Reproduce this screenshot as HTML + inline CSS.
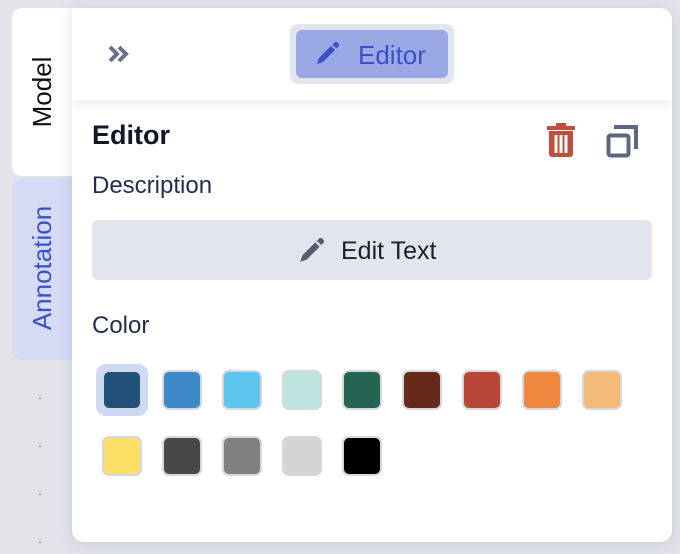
<!DOCTYPE html>
<html><head><style>
*{box-sizing:border-box;margin:0;padding:0}
body{width:680px;height:554px;background:#e3e4ea;font-family:"Liberation Sans",sans-serif;position:relative;overflow:hidden}
.dot{position:absolute;width:2px;height:2px;background:#999;border-radius:1px}
.tab{position:absolute;left:12px;width:70px;border-radius:10px 0 0 10px}
.vt{position:absolute;left:-70px;width:200px;height:30px;line-height:30px;text-align:center;transform:rotate(-90deg);white-space:nowrap;font-size:26px}
.panel{position:absolute;left:72px;top:8px;width:600px;height:534px;background:#fff;border-radius:0 12px 12px 12px;box-shadow:0 2px 14px rgba(120,125,150,.25);overflow:hidden}
.hdr{position:absolute;left:0;top:0;width:600px;height:92px;background:#fff;box-shadow:0 4px 10px rgba(0,0,0,.08)}
.sw{position:absolute;width:40px;height:40px;border-radius:7px;border:2px solid #d6d8e0}
</style></head><body>
<div class="dot" style="left:39px;top:397px"></div>
<div class="dot" style="left:39px;top:445px"></div>
<div class="dot" style="left:39px;top:493px"></div>
<div class="dot" style="left:39px;top:541px"></div>
<div class="tab" style="top:8px;height:168px;background:#fff"><div class="vt" style="top:69px;color:#111">Model</div></div>
<div class="tab" style="top:178px;height:182px;background:#d5dbf5"><div class="vt" style="top:75px;color:#3a50c8">Annotation</div></div>
<div class="panel">
 <div class="hdr">
  <svg style="position:absolute;left:35px;top:36px" width="26" height="20" viewBox="0 0 26 20"><path d="M3 3l7 7-7 7M12 3l7 7-7 7" fill="none" stroke="#6b7089" stroke-width="4"/></svg>
  <div style="position:absolute;left:218px;top:16px;width:164px;height:60px;background:#e3e5ee;border-radius:8px"></div>
  <div style="position:absolute;left:224px;top:22px;width:152px;height:48px;background:#9aa8e6;border-radius:6px"></div>
  <svg style="position:absolute;left:241px;top:32px" width="28" height="28" viewBox="0 0 28 28"><path d="M4 24l2-6L18 6l4 4L10 22z" fill="#3a50c8"/><path d="M19.5 4.5l2-2a2 2 0 0 1 3 0l1 1a2 2 0 0 1 0 3l-2 2z" fill="#3a50c8"/></svg>
  <div style="position:absolute;left:286px;top:32px;font-size:26px;color:#3a50c8">Editor</div>
 </div>
 <div style="position:absolute;left:20px;top:112px;font-size:27px;font-weight:bold;color:#111827">Editor</div>
 <svg style="position:absolute;left:474px;top:114px" width="30" height="36" viewBox="0 0 30 36"><rect x="1" y="4" width="28" height="4" fill="#c14d3c"/><rect x="10" y="1" width="10" height="5" fill="#c14d3c"/><path d="M3 9h24v23a3 3 0 0 1-3 3H6a3 3 0 0 1-3-3z" fill="#c14d3c"/><rect x="8.5" y="13" width="3" height="18" fill="#fff"/><rect x="13.5" y="13" width="3" height="18" fill="#fff"/><rect x="18.5" y="13" width="3" height="18" fill="#fff"/></svg>
 <svg style="position:absolute;left:534px;top:115px" width="34" height="36" viewBox="0 0 34 36"><rect x="2.5" y="12.5" width="20" height="20" rx="2" fill="none" stroke="#5f6680" stroke-width="4"/><path d="M10 6V4h20v20h-2" fill="none" stroke="#5f6680" stroke-width="4"/></svg>
 <div style="position:absolute;left:20px;top:164px;font-size:24px;color:#1f2f4d">Description</div>
 <div style="position:absolute;left:20px;top:212px;width:560px;height:60px;background:#e3e5ee;border-radius:6px"></div>
 <svg style="position:absolute;left:224px;top:228px" width="30" height="30" viewBox="0 0 28 28"><path d="M4 24l2-6L18 6l4 4L10 22z" fill="#555c70"/><path d="M19.5 4.5l2-2a2 2 0 0 1 3 0l1 1a2 2 0 0 1 0 3l-2 2z" fill="#555c70"/></svg>
 <div style="position:absolute;left:269px;top:229px;font-size:25px;color:#1a1f2e">Edit Text</div>
 <div style="position:absolute;left:20px;top:304px;font-size:24px;color:#1f2f4d">Color</div>
 <div style="position:absolute;left:24px;top:356px;width:52px;height:52px;border-radius:10px;background:#cfdaf7"></div>
 <div class="sw" style="left:30px;top:362px;background:#1f5079"></div>
 <div class="sw" style="left:90px;top:362px;background:#3e8ac8"></div>
 <div class="sw" style="left:150px;top:362px;background:#5ec5ef"></div>
 <div class="sw" style="left:210px;top:362px;background:#bde4de"></div>
 <div class="sw" style="left:270px;top:362px;background:#256353"></div>
 <div class="sw" style="left:330px;top:362px;background:#662a18"></div>
 <div class="sw" style="left:390px;top:362px;background:#b84737"></div>
 <div class="sw" style="left:450px;top:362px;background:#ef873e"></div>
 <div class="sw" style="left:510px;top:362px;background:#f3b978"></div>
 <div class="sw" style="left:30px;top:428px;background:#fae067"></div>
 <div class="sw" style="left:90px;top:428px;background:#484848"></div>
 <div class="sw" style="left:150px;top:428px;background:#7f7f7f"></div>
 <div class="sw" style="left:210px;top:428px;background:#d4d4d4"></div>
 <div class="sw" style="left:270px;top:428px;background:#000"></div>
</div>
</body></html>
